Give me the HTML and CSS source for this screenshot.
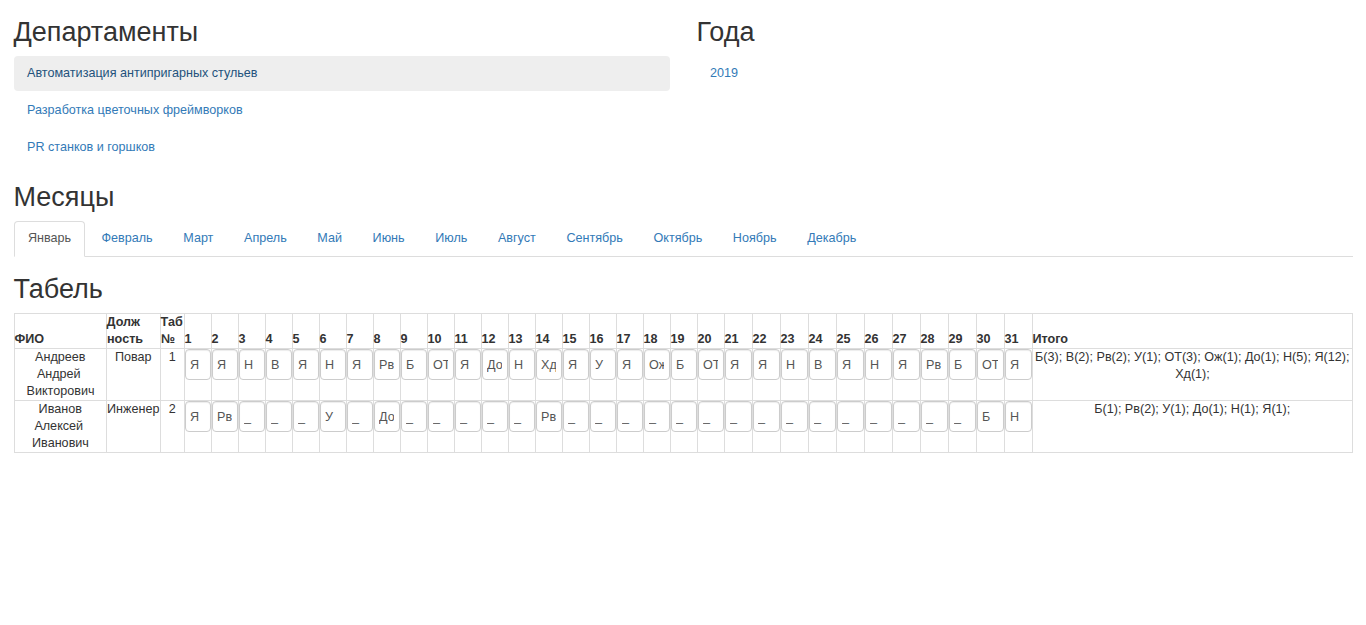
FILE: index.html
```
<!DOCTYPE html>
<html lang="ru">
<head>
<meta charset="utf-8">
<title>Табель</title>
<link rel="stylesheet" href="styles.css">
</head>
<body>
<div class="page">
<div class="row">
<section class="col">
<h2>Департаменты</h2>
<ul class="pills">
<li class="active"><a>Автоматизация антипригарных стульев</a></li>
<li><a>Разработка цветочных фреймворков</a></li>
<li><a>PR станков и горшков</a></li>
</ul>
</section>
<section class="col">
<h2>Года</h2>
<ul class="pills"><li><a>2019</a></li></ul>
</section>
</div>
<h2 class="months-title">Месяцы</h2>
<ul class="tabs">
<li class="active"><a>Январь</a></li>
<li><a>Февраль</a></li>
<li><a>Март</a></li>
<li><a>Апрель</a></li>
<li><a>Май</a></li>
<li><a>Июнь</a></li>
<li><a>Июль</a></li>
<li><a>Август</a></li>
<li><a>Сентябрь</a></li>
<li><a>Октябрь</a></li>
<li><a>Ноябрь</a></li>
<li><a>Декабрь</a></li>
</ul>
<h2 class="sheet-title">Табель</h2>
<table class="sheet">
<colgroup><col class="c-name"><col class="c-post"><col class="c-num"><col class="c-day" span="20"><col class="c-day-wide" span="11"><col class="c-total"></colgroup>
<thead><tr>
<th>ФИО</th><th>Долж<br>ность</th><th>Таб<br>№</th>
<th>1</th><th>2</th><th>3</th><th>4</th><th>5</th><th>6</th><th>7</th><th>8</th><th>9</th><th>10</th>
<th>11</th><th>12</th><th>13</th><th>14</th><th>15</th><th>16</th><th>17</th><th>18</th><th>19</th><th>20</th>
<th>21</th><th>22</th><th>23</th><th>24</th><th>25</th><th>26</th><th>27</th><th>28</th><th>29</th><th>30</th><th>31</th>
<th>Итого</th>
</tr></thead>
<tbody>
<tr>
<td>Андреев<br>Андрей&nbsp;<br>Викторович</td><td>Повар</td><td>1</td>
<td><input value="Я"></td><td><input value="Я"></td><td><input value="Н"></td><td><input value="В"></td><td><input value="Я"></td><td><input value="Н"></td><td><input value="Я"></td><td><input value="Рв"></td><td><input value="Б"></td><td><input value="ОТ"></td>
<td><input value="Я"></td><td><input value="До"></td><td><input value="Н"></td><td><input value="Хд"></td><td><input value="Я"></td><td><input value="У"></td><td><input value="Я"></td><td><input value="Ож"></td><td><input value="Б"></td><td><input value="ОТ"></td>
<td><input value="Я"></td><td><input value="Я"></td><td><input value="Н"></td><td><input value="В"></td><td><input value="Я"></td><td><input value="Н"></td><td><input value="Я"></td><td><input value="Рв"></td><td><input value="Б"></td><td><input value="ОТ"></td><td><input value="Я"></td>
<td>Б(3); В(2); Рв(2); У(1); ОТ(3); Ож(1); До(1); Н(5); Я(12);<br>Хд(1);</td>
</tr>
<tr>
<td>Иванов<br>Алексей&nbsp;<br>Иванович</td><td>Инженер</td><td>2</td>
<td><input value="Я"></td><td><input value="Рв"></td><td><input value="_"></td><td><input value="_"></td><td><input value="_"></td><td><input value="У"></td><td><input value="_"></td><td><input value="До"></td><td><input value="_"></td><td><input value="_"></td>
<td><input value="_"></td><td><input value="_"></td><td><input value="_"></td><td><input value="Рв"></td><td><input value="_"></td><td><input value="_"></td><td><input value="_"></td><td><input value="_"></td><td><input value="_"></td><td><input value="_"></td>
<td><input value="_"></td><td><input value="_"></td><td><input value="_"></td><td><input value="_"></td><td><input value="_"></td><td><input value="_"></td><td><input value="_"></td><td><input value="_"></td><td><input value="_"></td><td><input value="Б"></td><td><input value="Н"></td>
<td>Б(1); Рв(2); У(1); До(1); Н(1); Я(1);</td>
</tr>
</tbody>
</table>
</div>
</body>
</html>
```
FILE: styles.css
```
* { box-sizing: border-box; }
body {
  margin: 0;
  background: #fff;
  color: #333;
  font: 12.6px/17px "Liberation Sans", Arial, sans-serif;
}
.page { padding: 17px 13px 0 14px; }
.row { display: flex; gap: 27px; }
.col { width: 656px; }
h2 {
  margin: 0 0 9px;
  font-size: 27px;
  font-weight: 500;
  line-height: 30px;
  text-indent: -0.5px;
}
ul { list-style: none; margin: 0; padding: 0; }
a { color: #337ab7; display: block; }
.pills { display: flex; flex-direction: column; gap: 2px; }
.pills a { padding: 9px 13px; border-radius: 4px; }
.pills .active a { background: #eee; color: #23527c; }
.months-title { margin-top: 17px; }
.tabs { display: flex; gap: 2px; height: 36px; border-bottom: 1px solid #ddd; }
.tabs a {
  height: 36px;
  padding: 8px 13.3px;
  border: 1px solid transparent;
  border-radius: 4px 4px 0 0;
}
.tabs .active a {
  padding: 8px 13px;
  color: #555;
  background: #fff;
  border-color: #ddd #ddd #fff;
}
.sheet-title { margin-top: 17px; }
.sheet {
  width: 1339px;
  table-layout: fixed;
  border-collapse: collapse;
}
.c-name { width: 92px; }
.c-post { width: 54px; }
.c-num { width: 24px; }
.c-day { width: 27px; }
.c-day-wide { width: 28px; }
.c-total { width: 320px; }
.sheet th, .sheet td { padding: 0; border: 1px solid #ddd; white-space: nowrap; text-indent: -0.5px; }
.sheet th { height: 35px; text-align: left; vertical-align: bottom; }
.sheet td { height: 52px; text-align: center; vertical-align: top; }
.sheet input {
  display: block;
  width: 100%;
  height: 31px;
  margin: 0;
  padding: 5px 5px 5px 4px;
  border: 1px solid #ccc;
  border-radius: 4px;
  background: #fff;
  box-shadow: inset 0 1px 1px rgba(0, 0, 0, .075);
  color: #555;
  font: inherit;
  text-indent: 0;
}
```
